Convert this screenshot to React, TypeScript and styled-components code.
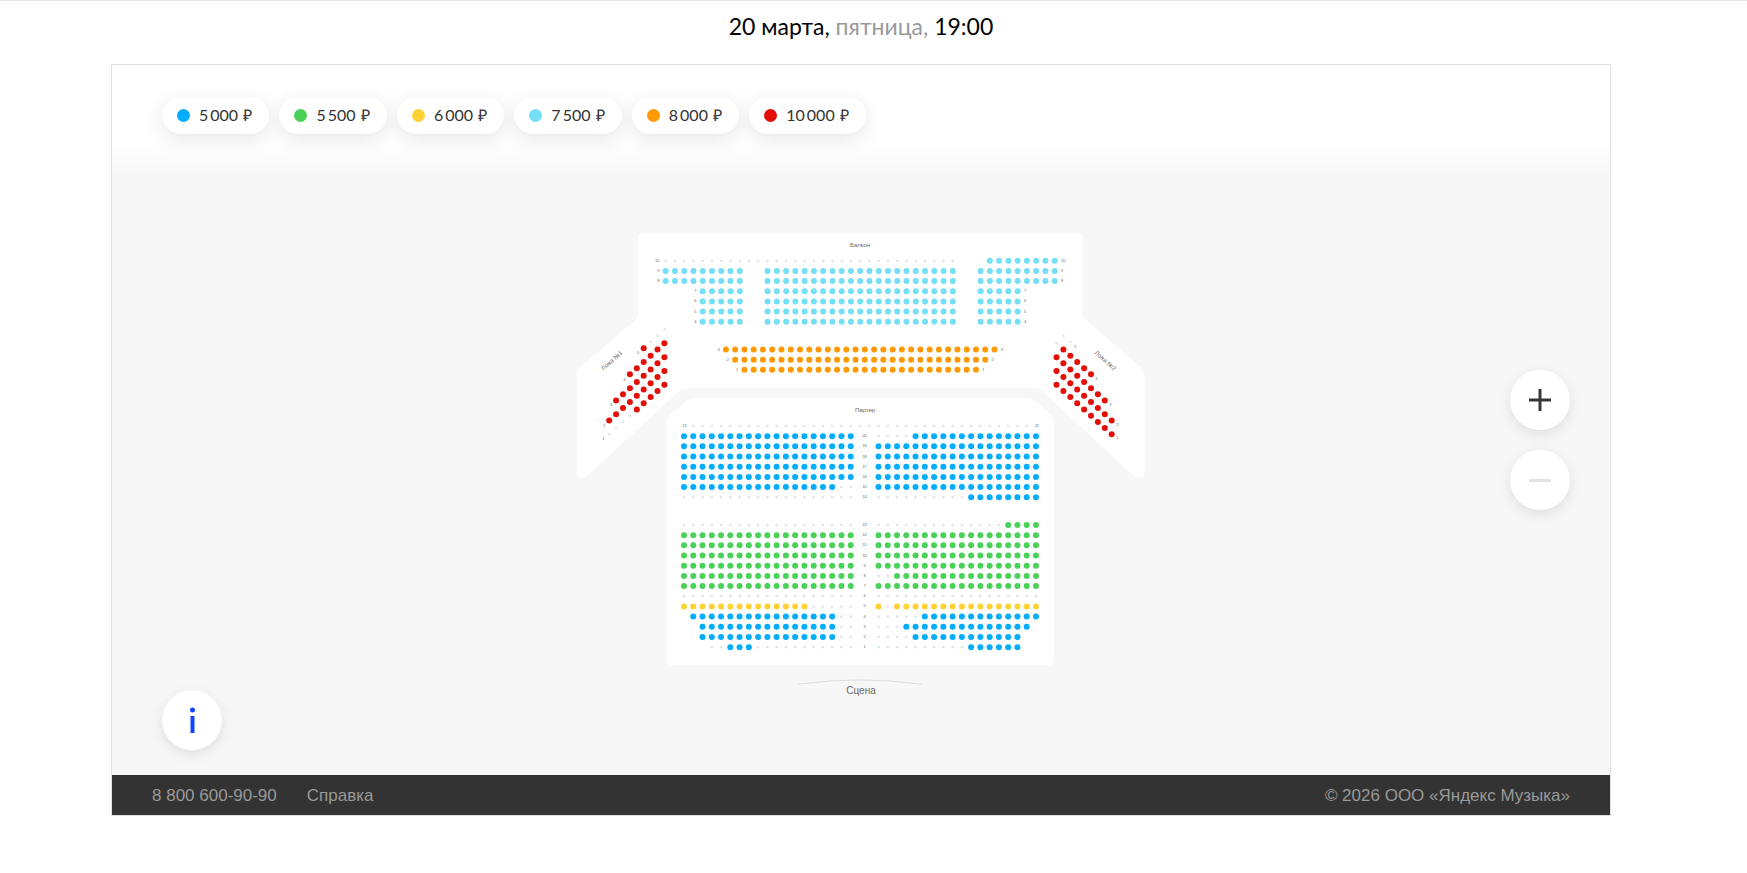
import React from "react";
import styled, { createGlobalStyle } from "styled-components";

const GlobalStyle = createGlobalStyle`
  *, *::before, *::after { box-sizing: border-box; }
  body {
    margin: 0;
    background: #fff;
    color: #000;
    font-family: "Liberation Sans", Arial, sans-serif;
  }
`;

const price = {
  blue: "#03adfb",
  green: "#49d257",
  yellow: "#ffd233",
  cyan: "#74dff5",
  orange: "#ff9a04",
  red: "#e10f06",
};
type Tone = keyof typeof price;

const Page = styled.main`
  border-top: 1px solid #e5e5e5;
  padding-right: 25px;
`;

const SessionTitle = styled.h1`
  margin: 0;
  padding: 9px 0 22px;
  font: 400 23px/32px Lato, "Open Sans", sans-serif;
  text-align: center;
`;

const Weekday = styled.span`
  color: #999;
`;

const Frame = styled.section`
  max-width: 1500px;
  margin: 0 auto;
  border: 1px solid #e0e0e0;
`;

const Hall = styled.div`
  background: #f7f7f7;
`;

const Legend = styled.div`
  display: flex;
  flex-wrap: wrap;
  gap: 10px;
  padding: 32px 50px 41px;
  background: linear-gradient(#fff 76px, #f7f7f7 100%);
`;

const PriceChip = styled.button`
  display: flex;
  align-items: center;
  gap: 9px;
  height: 37px;
  padding: 0 17px 1px 15px;
  border: 0;
  border-radius: 20px;
  background: #fff;
  box-shadow: 0 5px 20px rgba(0, 0, 0, 0.1);
  color: #333;
  font: 400 16px/20px Lato, "Open Sans", sans-serif;
  cursor: pointer;
`;

const Swatch = styled.span<{ $tone: Tone }>`
  width: 13px;
  height: 13px;
  border-radius: 50%;
  background: ${({ $tone }) => price[$tone]};
`;

const MapArea = styled.div`
  display: grid;
  grid-template-columns: 1fr minmax(0, 570px) 1fr;
`;

const InfoCell = styled.div`
  display: flex;
  align-items: flex-end;
  padding: 0 0 25px 50px;
`;

const ZoomCell = styled.div`
  display: flex;
  flex-direction: column;
  align-items: flex-end;
  justify-content: center;
  gap: 20px;
  padding: 0 40px 70px 0;
`;

const RoundButton = styled.button`
  display: flex;
  align-items: center;
  justify-content: center;
  width: 60px;
  height: 60px;
  padding: 0;
  border: 0;
  border-radius: 50%;
  background: #fff;
  box-shadow: 0 4px 14px rgba(0, 0, 0, 0.1);
  color: #363636;
  cursor: pointer;

  &:disabled {
    color: #e3e3e3;
    cursor: default;
  }
`;

const Scheme = styled.svg`
  display: block;
  width: 100%;
  height: auto;
  margin: 58px 0 75px;
  font-family: "Liberation Sans", Arial, sans-serif;
  text-anchor: middle;
`;

const SectionName = styled.text`
  font-size: 6px;
  fill: #666;
`;

const StageName = styled.text`
  font-size: 10px;
  fill: #666;
`;

const RowNumber = styled.text`
  font-size: 4px;
  fill: #666;
`;

const Footer = styled.footer`
  display: flex;
  gap: 30px;
  padding: 1px 40px 0;
  background: #333;
  color: #999;
  font-size: 17px;
  line-height: 39px;
`;

const FooterLink = styled.a`
  color: inherit;
  text-decoration: none;
`;

const Copyright = styled.span`
  margin-left: auto;
`;

const legend: { tone: Tone; label: string }[] = [
  { tone: "blue", label: "5\u2009000\u2004₽" },
  { tone: "green", label: "5\u2009500\u2004₽" },
  { tone: "yellow", label: "6\u2009000\u2004₽" },
  { tone: "cyan", label: "7\u2009500\u2004₽" },
  { tone: "orange", label: "8\u2009000\u2004₽" },
  { tone: "red", label: "10\u2009000\u2004₽" },
];

const STEP = 9.262;
const ROW = 10.18;

// A run of neighbouring seats: first column, last column, price ("sold" when taken).
type Run = [number, number, Tone | "sold"];
type SeatRow = { y: number; runs: Run[]; labels: [number, string][] };

const upper = (n: number): SeatRow => {
  const y = 27.7 + (10 - n) * ROW;
  if (n === 10)
    return { y, runs: [[0, 31, "sold"], [35, 42, "cyan"]], labels: [[-0.92, "10"], [42.92, "10"]] };
  const wide = n > 7;
  return {
    y,
    runs: [[wide ? 0 : 4, 8, "cyan"], [11, 31, "cyan"], [34, wide ? 42 : 38, "cyan"]],
    labels: [[wide ? -0.8 : 3.2, `${n}`], [wide ? 42.8 : 38.8, `${n}`]],
  };
};

const lower = (n: number): SeatRow => ({
  y: 116.5 + (3 - n) * ROW,
  runs: [[9.5 - n, 32.5 + n, "orange"]],
  labels: [[8.7 - n, `${n}`], [33.3 + n, `${n}`]],
});

const balcony: SeatRow[] = [...[10, 9, 8, 7, 6, 5, 4].map(upper), ...[3, 2, 1].map(lower)];

const full = (tone: Tone | "sold"): Run[] => [[0, 18, tone], [21, 38, tone]];

const stallRuns: Record<number, Run[]> = {
  20: [[0, 18, "blue"], [21, 24, "sold"], [25, 38, "blue"]],
  19: full("blue"),
  18: full("blue"),
  17: full("blue"),
  16: full("blue"),
  15: [[0, 16, "blue"], [17, 18, "sold"], [21, 38, "blue"]],
  14: [[0, 18, "sold"], [21, 30, "sold"], [31, 38, "blue"]],
  13: [[0, 18, "sold"], [21, 34, "sold"], [35, 38, "green"]],
  12: full("green"),
  11: full("green"),
  10: full("green"),
  9: full("green"),
  8: [[0, 18, "green"], [21, 22, "sold"], [23, 38, "green"]],
  7: full("green"),
  6: full("sold"),
  5: [[0, 13, "yellow"], [14, 18, "sold"], [21, 21, "yellow"], [22, 22, "sold"], [23, 38, "yellow"]],
  4: [[1, 16, "blue"], [17, 18, "sold"], [21, 25, "sold"], [26, 38, "blue"]],
  3: [[2, 16, "blue"], [17, 18, "sold"], [21, 23, "sold"], [24, 37, "blue"]],
  2: [[2, 16, "blue"], [17, 18, "sold"], [21, 24, "sold"], [25, 36, "blue"]],
  1: [[3, 4, "sold"], [5, 7, "blue"], [8, 18, "sold"], [21, 30, "sold"], [31, 36, "blue"]],
};

const stalls: SeatRow[] = [
  { y: 193, runs: [[1, 37, "sold"]], labels: [[0.05, "21"], [38.1, "21"]] },
  ...Object.entries(stallRuns).map(([key, runs]) => {
    const n = Number(key);
    const y = n > 13 ? 193 + (21 - n) * ROW : 292 + (13 - n) * ROW;
    return { y, runs, labels: [[19.5, key]] as [number, string][] };
  }),
];

const leftBox: Run[][] = [
  [[0, 3, "sold"], [4, 8, "red"]],
  [[0, 8, "red"]],
  [[1, 8, "red"]],
  [[3, 8, "red"]],
  [[5, 5, "red"], [6, 8, "sold"]],
];
const rightBox: Run[][] = [
  [[0, 8, "red"]],
  [[0, 8, "red"]],
  [[0, 7, "red"]],
  [[0, 0, "sold"], [1, 5, "red"]],
  [[1, 2, "sold"]],
];
const leftBoxLabels = [[27.3, 207.4], [28, 193.7], [35, 173.4], [48.3, 148], [62, 121.4]];
const rightBoxLabels = [[541, 206.4], [541.3, 193], [534.3, 172.7], [520.3, 147.4], [499.3, 114.7]];

function Seat({ x, y, kind }: { x: number; y: number; kind: Tone | "sold" }) {
  return kind === "sold" ? (
    <circle cx={x} cy={y} r={1.3} fill="#e2e2e2" />
  ) : (
    <circle cx={x} cy={y} r={3} fill={price[kind]} />
  );
}

const columns = ([from, to]: Run) => Array.from({ length: to - from + 1 }, (_, i) => from + i);

function Block({ rows, left }: { rows: SeatRow[]; left: number }) {
  return (
    <g>
      {rows.map((row) => (
        <g key={row.y}>
          {row.runs.flatMap((run) =>
            columns(run).map((c) => <Seat key={c} x={left + c * STEP} y={row.y} kind={run[2]} />),
          )}
          {row.labels.map(([c, label]) => (
            <RowNumber key={c} x={left + c * STEP} y={row.y + 1}>
              {label}
            </RowNumber>
          ))}
        </g>
      ))}
    </g>
  );
}

interface BoxProps {
  rows: Run[][];
  left: number;
  top: number;
  slope: number;
  labels: number[][];
}

function Box({ rows, left, top, slope, labels }: BoxProps) {
  return (
    <g>
      {rows.map((runs, r) => (
        <g key={r}>
          {runs.flatMap((run) =>
            columns(run).map((c) => (
              <Seat key={c} x={left + c * 6.9} y={top + c * slope - r * 13.78} kind={run[2]} />
            )),
          )}
          <RowNumber x={labels[r][0]} y={labels[r][1]}>
            {r + 1}
          </RowNumber>
        </g>
      ))}
    </g>
  );
}

function HallScheme() {
  return (
    <Scheme viewBox="0 0 570 467" role="img" aria-label="Схема зала">
      <path
        fill="#fff"
        d="M66 0H502.500Q506.500 0 506.500 4V81Q506.500 84 509 86.500L565 134.500Q568.500 137.500 568.500 141V240Q568.500 245 563.500 245Q560.500 245 557.500 242.500L466 158Q462 154.700 458 154.700H111Q107 154.700 103 158L11.500 242.500Q8.500 245 5.500 245Q.5 245 .5 240V141Q.5 137.500 4 134.500L60 86.500Q62 84.500 62 81V4Q62 0 66 0Z"
      />
      <path
        fill="#fff"
        d="M118 165H452Q456 165 459 167.500L474.500 181.500Q477.700 184.500 477.700 188.500V427Q477.700 432 472.700 432H95.700Q90.700 432 90.700 427V188.500Q90.700 184.500 94 181.500L111 167.500Q114 165 118 165Z"
      />
      <SectionName x={284} y={14}>Балкон</SectionName>
      <SectionName x={289} y={179}>Партер</SectionName>
      <SectionName transform="translate(37 129) rotate(-42)">Ложа №1</SectionName>
      <SectionName transform="translate(528 129) rotate(42)">Ложа №2</SectionName>
      <Block rows={balcony} left={89.7} />
      <Block rows={stalls} left={108} />
      <Box rows={leftBox} left={33.2} top={201.3} slope={-6.2} labels={leftBoxLabels} />
      <Box rows={rightBox} left={480.5} top={151.7} slope={6.2} labels={rightBoxLabels} />
      <path d="M221.700 451.300Q284 442.500 346 451.300" fill="none" stroke="#dcdcdc" strokeWidth={1} />
      <StageName x={285} y={461}>Сцена</StageName>
    </Scheme>
  );
}

export default function App() {
  return (
    <>
      <GlobalStyle />
      <Page>
        <SessionTitle>
          20 марта, <Weekday>пятница,</Weekday> 19:00
        </SessionTitle>
        <Frame>
          <Hall>
            <Legend>
              {legend.map(({ tone, label }) => (
                <PriceChip key={tone} type="button">
                  <Swatch $tone={tone} />
                  {label}
                </PriceChip>
              ))}
            </Legend>
            <MapArea>
              <InfoCell>
                <RoundButton type="button" aria-label="Информация">
                  <svg width="26" height="26" viewBox="0 0 26 26" fill="#0f45ff">
                    <circle cx="13.500" cy="3" r="2.500" />
                    <path d="M11.500 9h4v17h-4z" />
                  </svg>
                </RoundButton>
              </InfoCell>
              <HallScheme />
              <ZoomCell>
                <RoundButton type="button" aria-label="Увеличить">
                  <svg width="22" height="22" viewBox="0 0 22 22" stroke="currentColor" strokeWidth="3">
                    <path d="M11 0v22M0 11h22" />
                  </svg>
                </RoundButton>
                <RoundButton type="button" aria-label="Уменьшить" disabled>
                  <svg width="22" height="22" viewBox="0 0 22 22" stroke="currentColor" strokeWidth="3">
                    <path d="M0 11.500h22" />
                  </svg>
                </RoundButton>
              </ZoomCell>
            </MapArea>
          </Hall>
          <Footer>
            <FooterLink href="tel:88006009090">8 800 600-90-90</FooterLink>
            <FooterLink href="#help">Справка</FooterLink>
            <Copyright>© 2026 ООО «Яндекс Музыка»</Copyright>
          </Footer>
        </Frame>
      </Page>
    </>
  );
}
